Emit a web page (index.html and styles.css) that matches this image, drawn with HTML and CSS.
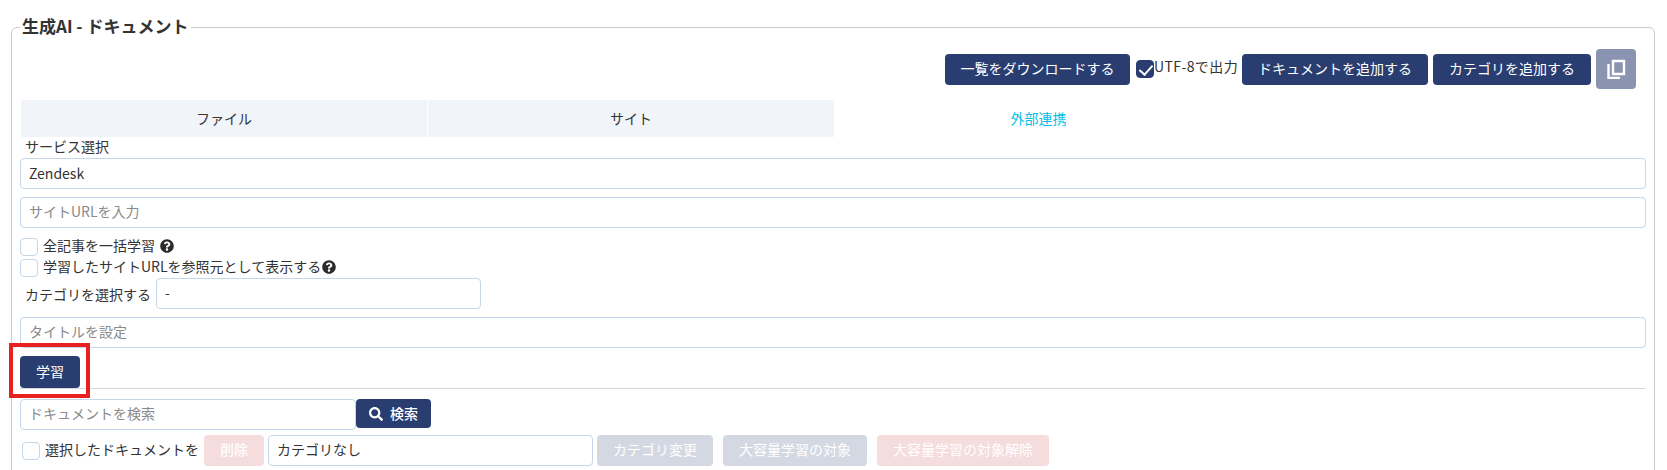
FILE: index.html
```html
<!DOCTYPE html>
<html lang="ja">
<head>
  <meta charset="UTF-8" />
  <meta name="viewport" content="width=device-width, initial-scale=1.0"/>
  <title>生成AI - ドキュメント</title>
  <link rel="stylesheet" href="styles.css">
</head>
<body>

  <fieldset class="panel">
    <legend>生成AI - ドキュメント</legend>

    <!-- Top actions -->
    <div class="actions">
      <button class="btn btn-download">一覧をダウンロードする</button>
      <label class="utf-check">
        <input type="checkbox" class="check" checked>
        <span>UTF-8で出力</span>
      </label>
      <button class="btn btn-doc">ドキュメントを追加する</button>
      <button class="btn btn-cat">カテゴリを追加する</button>
      <button class="btn-copy" aria-label="copy">
        <svg width="20" height="20" viewBox="0 0 20 20"><path fill="none" stroke="#fff" stroke-width="2.4" d="M7 2h11v13H7zM2.500 5v14h11.500"/></svg>
      </button>
    </div>

    <div class="tabs">
      <div class="tab">ファイル</div>
      <div class="tab">サイト</div>
      <div class="tab tab-active">外部連携</div>
    </div>

    <div class="field-label">サービス選択</div>
    <select class="control control-select"><option>Zendesk</option></select>
    <input class="control control-gap" type="text" placeholder="サイトURLを入力">

    <div class="options">
      <label class="option">
        <input type="checkbox" class="check">
        <span>全記事を一括学習</span>
        <svg class="help help-gap" viewBox="0 0 512 512"><path d="M504 256c0 136.997-111.043 248-248 248S8 392.997 8 256C8 119.083 119.043 8 256 8s248 111.083 248 248zM262.655 90c-54.497 0-89.255 22.957-116.549 63.758-3.536 5.286-2.353 12.415 2.715 16.258l34.699 26.310c5.205 3.947 12.621 3.008 16.665-2.122 17.864-22.658 30.113-35.797 57.303-35.797 20.429 0 45.698 13.148 45.698 32.958 0 14.976-12.363 22.667-32.534 33.976C247.128 238.528 216 254.941 216 296v4c0 6.627 5.373 12 12 12h56c6.627 0 12-5.373 12-12v-1.333c0-28.462 83.186-29.647 83.186-106.667 0-58.002-60.165-102-116.531-102zM256 338c-25.365 0-46 20.635-46 46 0 25.364 20.635 46 46 46s46-20.636 46-46c0-25.365-20.635-46-46-46z"/></svg>
      </label>
      <label class="option">
        <input type="checkbox" class="check">
        <span>学習したサイトURLを参照元として表示する</span>
        <svg class="help help-tight" viewBox="0 0 512 512"><path d="M504 256c0 136.997-111.043 248-248 248S8 392.997 8 256C8 119.083 119.043 8 256 8s248 111.083 248 248zM262.655 90c-54.497 0-89.255 22.957-116.549 63.758-3.536 5.286-2.353 12.415 2.715 16.258l34.699 26.310c5.205 3.947 12.621 3.008 16.665-2.122 17.864-22.658 30.113-35.797 57.303-35.797 20.429 0 45.698 13.148 45.698 32.958 0 14.976-12.363 22.667-32.534 33.976C247.128 238.528 216 254.941 216 296v4c0 6.627 5.373 12 12 12h56c6.627 0 12-5.373 12-12v-1.333c0-28.462 83.186-29.647 83.186-106.667 0-58.002-60.165-102-116.531-102zM256 338c-25.365 0-46 20.635-46 46 0 25.364 20.635 46 46 46s46-20.636 46-46c0-25.365-20.635-46-46-46z"/></svg>
      </label>
    </div>

    <div class="category-row">
      <span>カテゴリを選択する</span>
      <select class="control category-select"><option>-</option></select>
    </div>

    <input class="control control-gap" type="text" placeholder="タイトルを設定">

    <div class="learn-row">
      <span class="learn-wrap">
        <button class="btn btn-learn">学習</button>
        <span class="highlight"></span>
      </span>
    </div>

    <hr class="divider">

    <div class="search-row">
      <input class="control search-input" type="text" placeholder="ドキュメントを検索">
      <button class="btn btn-search">
        <svg width="14" height="14" viewBox="0 0 512 512"><path fill="#fff" d="M505 442.700L405.300 343c-4.500-4.500-10.600-7-17-7H372c27.600-35.300 44-79.700 44-128C416 93.100 322.900 0 208 0S0 93.100 0 208s93.100 208 208 208c48.300 0 92.700-16.400 128-44v16.300c0 6.400 2.500 12.500 7 17l99.700 99.700c9.400 9.400 24.600 9.400 33.900 0l28.300-28.300c9.400-9.400 9.400-24.600.1-34zM208 336c-70.700 0-128-57.200-128-128 0-70.700 57.200-128 128-128 70.700 0 128 57.200 128 128 0 70.700-57.200 128-128 128z"/></svg>
        <span>検索</span>
      </button>
    </div>

    <div class="bulk-row">
      <label class="bulk-check">
        <input type="checkbox" class="check">
        <span>選択したドキュメントを</span>
      </label>
      <button class="btn btn-pink btn-delete">削除</button>
      <select class="control bulk-select"><option>カテゴリなし</option></select>
      <button class="btn btn-grey btn-change">カテゴリ変更</button>
      <button class="btn btn-grey btn-bulk">大容量学習の対象</button>
      <button class="btn btn-pink btn-unbulk">大容量学習の対象解除</button>
    </div>
  </fieldset>

</body>
</html>
```

FILE: styles.css
```css
* {
  box-sizing: border-box;
}

html, body {
  height: 470px;
  overflow: hidden;
}

body {
  margin: 0;
  padding: 17px 12px 0 11px;
  background-color: #fff;
  color: #333;
  font-family: "Noto Sans CJK JP", "Noto Sans", sans-serif;
  font-size: 14px;
}

button, select, input {
  font-family: inherit;
  font-size: 14px;
}

.panel {
  margin: 0;
  min-width: 0;
  height: 500px;
  padding: 0 8px;
  border: 1px solid #ccc;
  border-radius: 6px;
}

.panel legend {
  padding: 0 2px;
  height: 20px;
  line-height: 18px;
  font-size: 17px;
  font-weight: bold;
  color: #333;
}

/* Top actions */
.actions {
  display: flex;
  justify-content: flex-end;
  align-items: center;
  margin-top: 12px;
  padding-right: 10px;
  height: 40px;
}

.btn {
  height: 31px;
  padding: 0 0 3px;
  border: none;
  border-radius: 4px;
  background-color: #293d70;
  color: #fff;
  cursor: pointer;
}

.btn-download { width: 185px; }
.btn-doc { width: 186px; }
.btn-cat { width: 158px; margin-left: 5px; }

.btn-copy {
  display: flex;
  justify-content: center;
  align-items: center;
  width: 40px;
  height: 40px;
  margin-left: 5px;
  padding: 0;
  border: none;
  border-radius: 4px;
  background-color: #8a94b0;
}

.utf-check {
  display: flex;
  align-items: center;
  width: 112px;
  padding-left: 6px;
}

.utf-check span {
  margin-top: -6px;
  letter-spacing: 0.4px;
  white-space: nowrap;
}

.check {
  appearance: none;
  flex: none;
  position: relative;
  width: 18px;
  height: 18px;
  margin: 0;
  border: 1px solid #c5d5ea;
  border-radius: 4px;
  background-color: #fff;
}

.check:checked {
  border-color: #293d70;
  background-color: #293d70;
}

.check:checked::after {
  content: "";
  position: absolute;
  left: 5px;
  top: 1px;
  width: 6px;
  height: 11px;
  border: solid #fff;
  border-width: 0 2px 2px 0;
  transform: rotate(42deg);
}

/* Tabs */
.tabs {
  display: flex;
  height: 37px;
  margin-top: 11px;
  margin-left: 1px;
}

.tab {
  display: flex;
  justify-content: center;
  align-items: center;
  background-color: #f1f4f9;
  border-right: 1px solid #fff;
  width: 407px;
  padding-bottom: 2px;
}

.tab-active {
  background-color: #fff;
  border-right: none;
  color: #00bfe8;
}

.field-label {
  height: 21px;
  line-height: 19px;
  padding-left: 5px;
}

.control {
  display: block;
  width: 100%;
  height: 31px;
  padding: 0 8px 3px;
  border: 1px solid #c5d5ea;
  border-radius: 4px;
  background-color: #fff;
  color: #333;
  appearance: none;
  outline: none;
}

.control-select {
  padding-bottom: 1px;
}

.control::placeholder {
  color: #8a8a8a;
}

.control-gap {
  margin-top: 8px;
}

/* Checkbox options */
.options {
  margin-top: 8px;
}

.option {
  display: flex;
  align-items: center;
  height: 21px;
}

.option .check {
  margin-right: 5px;
}

.option span {
  margin-top: -3px;
}

.help {
  width: 14px;
  height: 14px;
  flex: none;
  margin-top: -2px;
  fill: #2b2b2b;
}

.help-gap {
  margin-left: 5px;
}

.help-tight {
  margin-left: 1px;
}

.category-row {
  display: flex;
  align-items: center;
  gap: 5px;
  padding-left: 5px;
}

.category-select {
  width: 325px;
}

.learn-row {
  margin-top: 8px;
  height: 32px;
}

.learn-wrap {
  position: relative;
  display: inline-block;
}

.btn-learn {
  display: block;
  width: 60px;
  height: 32px;
}

/* red box around the learn button */
.highlight {
  position: absolute;
  top: -13px;
  right: -10px;
  bottom: -10px;
  left: -11px;
  border: 4px solid #e8201f;
  pointer-events: none;
}

.divider {
  margin: 0;
  border: none;
  border-top: 1px solid #d9d9d9;
}

.search-row {
  display: flex;
  margin-top: 10px;
}

.search-input {
  width: 336px;
}

.btn-search {
  display: flex;
  justify-content: center;
  align-items: center;
  gap: 7px;
  width: 75px;
  height: 29px;
  padding-bottom: 0;
  font-weight: 500;
}

.btn-search span {
  margin-top: -2px;
}

.bulk-row {
  display: flex;
  align-items: center;
  margin-top: 5px;
}

.bulk-check {
  display: flex;
  align-items: center;
  width: 184px;
  padding-left: 2px;
}

.bulk-check .check {
  margin-right: 5px;
}

.bulk-check span {
  margin-top: -3px;
}

.btn-pink {
  background-color: #f5dcdd;
}

.btn-grey {
  background-color: #d3d8e2;
}

.btn-delete { width: 60px; font-weight: 500; }
.bulk-select { width: 325px; margin-left: 4px; }
.btn-change { width: 116px; margin-left: 4px; }
.btn-bulk { width: 144px; margin-left: 10px; }
.btn-unbulk { width: 172px; margin-left: 10px; }
```
